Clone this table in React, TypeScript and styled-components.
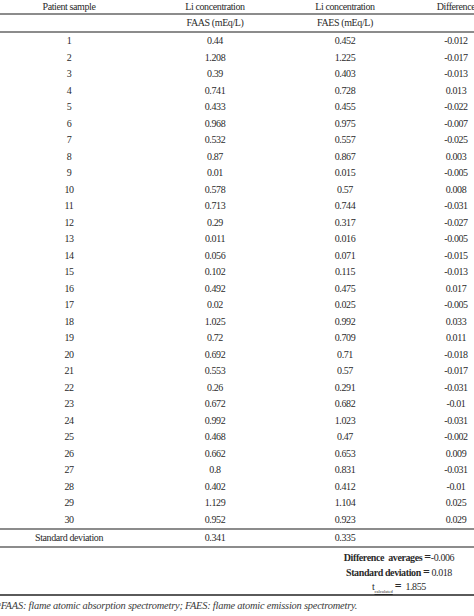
import * as React from 'react'
import styled, { createGlobalStyle } from 'styled-components'

const rows: [number, string, string, string][] = [
  [1, '0.44', '0.452', '-0.012'],
  [2, '1.208', '1.225', '-0.017'],
  [3, '0.39', '0.403', '-0.013'],
  [4, '0.741', '0.728', '0.013'],
  [5, '0.433', '0.455', '-0.022'],
  [6, '0.968', '0.975', '-0.007'],
  [7, '0.532', '0.557', '-0.025'],
  [8, '0.87', '0.867', '0.003'],
  [9, '0.01', '0.015', '-0.005'],
  [10, '0.578', '0.57', '0.008'],
  [11, '0.713', '0.744', '-0.031'],
  [12, '0.29', '0.317', '-0.027'],
  [13, '0.011', '0.016', '-0.005'],
  [14, '0.056', '0.071', '-0.015'],
  [15, '0.102', '0.115', '-0.013'],
  [16, '0.492', '0.475', '0.017'],
  [17, '0.02', '0.025', '-0.005'],
  [18, '1.025', '0.992', '0.033'],
  [19, '0.72', '0.709', '0.011'],
  [20, '0.692', '0.71', '-0.018'],
  [21, '0.553', '0.57', '-0.017'],
  [22, '0.26', '0.291', '-0.031'],
  [23, '0.672', '0.682', '-0.01'],
  [24, '0.992', '1.023', '-0.031'],
  [25, '0.468', '0.47', '-0.002'],
  [26, '0.662', '0.653', '0.009'],
  [27, '0.8', '0.831', '-0.031'],
  [28, '0.402', '0.412', '-0.01'],
  [29, '1.129', '1.104', '0.025'],
  [30, '0.952', '0.923', '0.029']
]

const App: React.FunctionComponent = () => (
  <Page>
    <GlobalStyle />
    <Table>
      <Row height={13} rule='light'>
        <Cell>Patient sample</Cell>
        <Cell>Li concentration</Cell>
        <Cell>Li concentration</Cell>
        <Cell>Difference</Cell>
      </Row>
      <Row height={16} rule='light'>
        <Cell />
        <Cell>FAAS (mEq/L)</Cell>
        <Cell>FAES (mEq/L)</Cell>
        <Cell />
      </Row>
      {rows.map(([n, faas, faes, diff]) => (
        <Row key={n} height={16.5}>
          <Cell>{n}</Cell>
          <Cell>{faas}</Cell>
          <Cell>{faes}</Cell>
          <Cell>{diff}</Cell>
        </Row>
      ))}
      <Row height={0} rule='light' />
      <Row height={16} rule='light'>
        <Cell>Standard deviation</Cell>
        <Cell>0.341</Cell>
        <Cell>0.335</Cell>
        <Cell />
      </Row>
    </Table>
    <Summary>
      <SummaryLine>
        <Label>Difference&nbsp; averages</Label> <Equals>=</Equals>-0.006
      </SummaryLine>
      <SummaryLine>
        <Label>Standard deviation</Label> <Equals>=</Equals> 0.018
      </SummaryLine>
      <SummaryLine>
        t<Sub>calculated</Sub><Equals>=</Equals>&nbsp; 1.855
      </SummaryLine>
    </Summary>
    <Footnote>
      <Sup>a</Sup>FAAS: flame atomic absorption spectrometry; FAES: flame atomic emission spectrometry.
    </Footnote>
  </Page>
)

export { App as default }

const GlobalStyle = createGlobalStyle`
  html, body {
    margin: 0;
    padding: 0;
    background: #fff;
    overflow: hidden;
  }
`

const Page = styled.div`
  width: 474px;
  height: 616px;
  overflow: hidden;
  font-family: "Liberation Serif", "Times New Roman", serif;
  font-size: 10px;
  letter-spacing: -0.4px;
  color: #2a2a2a;
`

const Table = styled.div`
  width: 514px;
  display: flex;
  flex-flow: column;
`

const Row = styled.div<{ height: number; rule?: 'light' }>`
  display: grid;
  grid-template-columns: 138px 154px 106px 116px;
  align-items: center;
  height: ${p => p.height}px;
  border-bottom: ${p => (p.rule ? '2px solid #8c8c8c' : 'none')};
`

const Cell = styled.div`
  text-align: center;
  white-space: nowrap;
  line-height: 1;
`

const Summary = styled.div`
  display: flex;
  flex-flow: column;
  align-items: center;
  width: 154px;
  padding: 2px 0 0 322px;
  border-bottom: 2px solid #5a5a5a;
`

const SummaryLine = styled.div`
  height: 14.5px;
  line-height: 14.5px;
  white-space: nowrap;
`

const Label = styled.span`
  font-weight: bold;
`

const Equals = styled.span`
  font-weight: bold;
  font-size: 12px;
`

const Sub = styled.sub`
  font-size: 4.5px;
  letter-spacing: 0;
  vertical-align: -3px;
  margin-right: 2px;
  text-decoration: underline;
`

const Footnote = styled.div`
  padding-top: 4px;
  font-size: 10.4px;
  font-style: italic;
  letter-spacing: -0.2px;
  color: #3a3a3a;
  white-space: nowrap;
`

const Sup = styled.sup`
  font-size: 6px;
  vertical-align: 3px;
  margin-left: -2px;
`
